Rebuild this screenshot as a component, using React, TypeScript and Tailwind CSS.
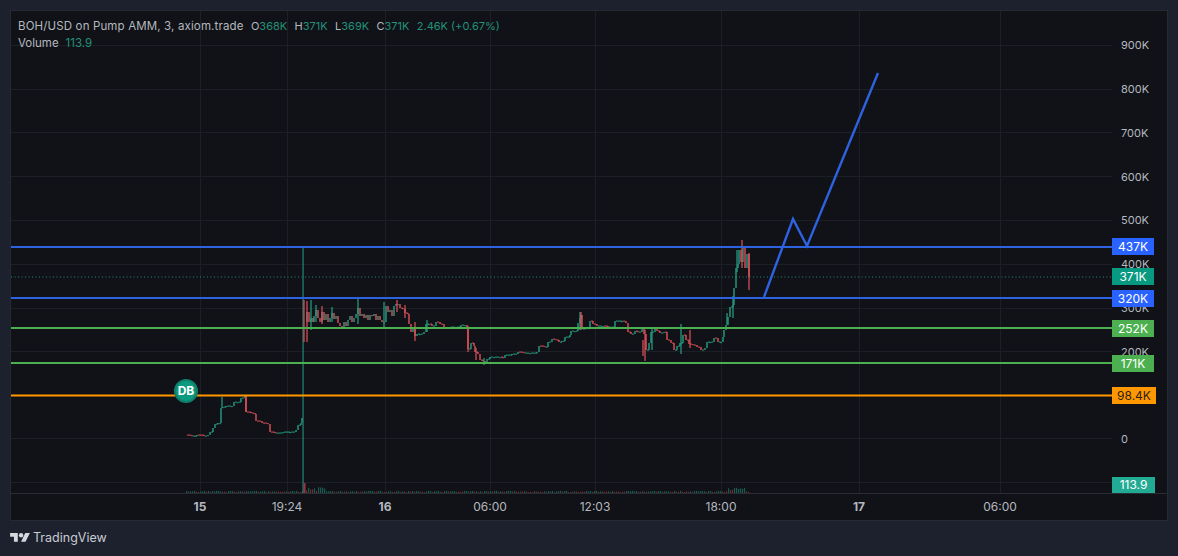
import React from 'react';

type Pt = [number, number];

const UP = '#26a085';
const DOWN = '#e0525c';

// price path in page pixels, drawn as stepped candles
const early: Pt[] = [
  [186, 435], [192, 436], [197, 435], [204, 436], [208, 435], [210, 432], [213, 428], [215, 424],
  [218, 423], [220, 423], [221, 408], [223, 407], [226, 406], [232, 406], [234, 402], [238, 402],
  [241, 398], [245, 396], [246, 412], [251, 413], [255, 414], [256, 421], [262, 423], [268, 424],
  [270, 432], [275, 433], [283, 432], [290, 432], [296, 430], [298, 425], [301, 423], [302, 418],
];

const main: Pt[] = [
  [305, 322], [307, 312], [309, 322], [311, 318], [313, 322], [314, 316], [316, 310], [318, 318],
  [320, 322], [322, 312], [324, 320], [326, 314], [328, 322], [330, 318], [332, 313], [334, 319],
  [336, 316], [338, 323], [340, 326], [342, 327], [344, 322], [346, 326], [348, 320], [350, 316],
  [352, 322], [354, 318], [356, 314], [358, 308], [360, 316], [362, 314], [364, 318], [366, 315],
  [368, 320], [370, 315], [372, 316], [374, 314], [376, 320], [378, 316], [380, 320], [382, 322],
  [384, 322], [386, 306], [388, 312], [390, 310], [392, 316], [394, 306], [396, 304], [398, 304],
  [400, 308], [403, 309], [405, 313], [408, 314], [409, 324], [411, 332], [413, 328], [415, 336],
  [417, 334], [420, 334], [424, 332], [426, 324], [429, 324], [432, 326], [436, 322], [440, 324],
  [444, 328], [450, 327], [456, 327], [461, 325], [465, 325], [467, 328], [468, 349], [471, 343],
  [474, 346], [475, 352], [478, 354], [480, 360], [483, 361], [485, 363], [487, 359], [490, 357],
  [494, 357], [500, 357], [503, 358], [505, 355], [512, 354], [518, 352], [524, 353], [530, 353],
  [537, 352], [539, 346], [545, 347], [548, 342], [552, 339], [556, 340], [559, 342], [562, 341],
  [565, 337], [570, 335], [571, 331], [575, 331], [578, 323], [580, 318], [581, 315], [582, 329],
  [586, 328], [589, 328], [590, 321], [593, 324], [597, 326], [603, 326], [608, 327], [611, 327],
  [615, 321], [622, 321], [626, 323], [628, 332], [631, 334], [635, 331], [638, 332], [642, 329],
  [644, 334], [646, 350], [649, 343], [651, 332], [655, 329], [657, 331], [660, 333], [664, 332],
  [667, 340], [671, 343], [674, 350], [677, 346], [680, 343], [683, 335], [686, 340], [689, 344],
  [693, 345], [697, 347], [701, 350], [705, 348], [707, 342], [710, 342], [714, 338], [718, 342],
  [721, 342], [723, 337], [724, 330], [726, 325], [728, 317], [730, 307], [733, 305], [734, 288],
  [736, 268], [738, 264], [739, 250], [741, 262], [743, 246], [745, 268], [747, 254], [749, 277],
];

// wicks as x, top y, bottom y
const wicks: [number, number, number, string][] = [
  [222, 397, 408, UP], [246, 395, 412, DOWN], [304, 300, 342, DOWN], [307, 301, 342, DOWN], [311, 300, 330, UP],
  [316, 305, 322, UP], [322, 306, 324, DOWN], [332, 307, 322, UP], [358, 298, 324, UP],
  [384, 302, 328, UP], [397, 300, 312, DOWN], [405, 305, 318, DOWN], [415, 322, 341, DOWN],
  [427, 320, 332, UP], [468, 326, 352, DOWN], [476, 348, 360, DOWN], [484, 358, 365, UP],
  [580, 312, 330, UP], [581, 312, 330, DOWN], [645, 330, 361, DOWN], [643, 340, 356, DOWN],
  [652, 328, 350, UP], [681, 324, 354, UP], [690, 330, 348, DOWN], [727, 313, 325, UP],
  [733, 296, 318, UP], [742, 240, 268, DOWN], [749, 253, 290, DOWN], [737, 250, 272, UP],
];

const vGrid = [200, 287, 385, 490, 595, 721, 859, 1000];
const hGrid = [45, 89, 132, 176, 220, 264, 308, 351, 395, 438, 482];

// the 100K row is fully behind the 98.4K tag, so it stays empty
const priceLabels = ['900K', '800K', '700K', '600K', '500K', '400K', '300K', '200K', '', '0'];

// small deterministic noise, so the picture is the same on every load
const noise = (i: number) => {
  const v = Math.sin(i * 12.9898) * 43758.5453;
  return v - Math.floor(v);
};

function Candles({ points }: { points: Pt[] }) {
  const out: React.ReactNode[] = [];
  points.forEach(([x, y], i) => {
    if (i === 0) return;
    const [px, py] = points[i - 1];
    const color = y <= py ? UP : DOWN;
    // hold the previous level across the gap, then jump
    for (let fx = px + 2; fx < x; fx += 2) {
      out.push(<rect key={`${x}-${fx}`} x={fx - 0.8} y={py - 0.5} width={1.6} height={1.2} fill={color} />);
    }
    out.push(
      <rect key={x} x={x - 0.7} y={Math.min(y, py)} width={1.4} height={Math.max(Math.abs(y - py), 1.2)} fill={color} />,
    );
  });
  return <>{out}</>;
}

function VolumeBars() {
  const bars: React.ReactNode[] = [];
  for (let x = 186; x < 750; x += 2) {
    const n = noise(x);
    let h = 0.8 + n * 1.4;
    if (x > 304 && x < 326) h = 1.5 + n * 5;
    if (x > 724 && x < 745) h = 1.5 + n * 4;
    bars.push(<rect key={x} x={x} y={493 - h} width={1.2} height={h} fill={n > 0.5 ? '#1a5a4f' : '#6a2e34'} />);
  }
  return <>{bars}</>;
}

function Chart() {
  return (
    <svg viewBox="11 11 1101 482" className="block h-[482px] w-[1101px]">
      {hGrid.map(y => (
        <line key={y} x1={11} x2={1112} y1={y + 0.5} y2={y + 0.5} stroke="#1c1f26" />
      ))}
      {vGrid.map(x => (
        <line key={x} x1={x + 0.5} x2={x + 0.5} y1={11} y2={493} stroke="#1c1f26" />
      ))}
      <VolumeBars />
      <Candles points={early} />
      <rect x={302.5} y={247} width={1.1} height={246} fill="#25907c" />
      <rect x={303.6} y={483} width={2} height={10} fill="#8f3840" />
      <Candles points={main} />
      {wicks.map(([x, top, bottom, color]) => (
        <rect key={`${x}-${top}`} x={x - 0.6} y={top} width={1.2} height={bottom - top} fill={color} />
      ))}
      <line x1={11} x2={1112} y1={277} y2={277} stroke="#1f8a73" strokeDasharray="1 2.5" />
      <line x1={11} x2={1112} y1={247} y2={247} stroke="#2e62e0" strokeWidth={2} />
      <line x1={11} x2={1112} y1={298} y2={298} stroke="#2e62e0" strokeWidth={2} />
      <line x1={11} x2={1112} y1={328} y2={328} stroke="#4caf50" strokeWidth={2} />
      <line x1={11} x2={1112} y1={363} y2={363} stroke="#4caf50" strokeWidth={2} />
      <line x1={11} x2={1112} y1={395.5} y2={395.5} stroke="#ff9800" strokeWidth={2} />
      <polyline points="764,297 793,219 807,246 878,73" fill="none" stroke="#2e62e0" strokeWidth={2.4} />
    </svg>
  );
}

function PriceTag({ text, className }: { text: string; className: string }) {
  return (
    <div className={`absolute left-0 flex items-center justify-center text-[12px] leading-none ${className}`}>
      {text}
    </div>
  );
}

export default function App() {
  return (
    <div className="flex h-[556px] w-[1178px] flex-col bg-[#1d212e] pl-[10px] pr-[10px] pt-[10px] font-['Inter',sans-serif]">
      <div className="flex h-[511px] flex-col border border-[#262a33] bg-[#101217]">
        <div className="flex h-[482px]">
          <div className="relative w-[1101px]">
            <Chart />
            <div className="absolute left-[7px] top-[7px] text-[11.5px] leading-[17px] text-[#b4b8bf]">
              <div className="flex gap-[7.4px] whitespace-nowrap text-[11px]">
                <span className="text-[11.5px] tracking-[0.14px]">BOH/USD on Pump AMM, 3, axiom.trade</span>
                <span>O<span className="text-[#22917a]">368K</span></span>
                <span>H<span className="text-[#22917a]">371K</span></span>
                <span>L<span className="text-[#22917a]">369K</span></span>
                <span>C<span className="text-[#22917a]">371K</span></span>
                <span className="text-[#22917a]">2.46K (+0.67%)</span>
              </div>
              <div className="flex gap-[7px]">
                <span>Volume</span>
                <span className="text-[#22917a]">113.9</span>
              </div>
            </div>
            {/* bubble marker sits on the orange line */}
            <div className="absolute left-[163px] top-[368px] flex h-[24px] w-[24px] items-center justify-center rounded-full border-2 border-[#0f7f6b] bg-[#0a9a7f] text-[12px] font-bold text-white">
              DB
            </div>
          </div>
          <div className="relative flex-1 pt-[13px] text-[11px] text-[#b4b8bf]">
            {priceLabels.map((label, i) => (
              <div key={i} className="flex h-[43.75px] items-center pl-[9px] leading-none">
                {label}
              </div>
            ))}
            <PriceTag text="437K" className="top-[227px] h-[17px] w-[42px] bg-[#2962ff] text-white" />
            <PriceTag text="371K" className="top-[257px] h-[17px] w-[42px] bg-[#089981] text-white" />
            <PriceTag text="320K" className="top-[279px] h-[17px] w-[42px] bg-[#2962ff] text-white" />
            <PriceTag text="252K" className="top-[309px] h-[17px] w-[42px] bg-[#4caf50] text-white" />
            <PriceTag text="171K" className="top-[344px] h-[17px] w-[42px] bg-[#4caf50] text-white" />
            <PriceTag text="98.4K" className="top-[376px] h-[17px] w-[44px] bg-[#ff9800] text-[#2b2116]" />
            <PriceTag text="113.9" className="top-[466px] h-[16px] w-[43px] bg-[#22ab94] text-white" />
          </div>
        </div>
        <div className="flex flex-1 items-center border-t border-[#2a2d34] text-[12px] text-[#b4b8bf]">
          <div className="ml-[189px] flex w-0 justify-center font-bold">15</div>
          <div className="ml-[87px] flex w-0 justify-center">19:24</div>
          <div className="ml-[98px] flex w-0 justify-center font-bold">16</div>
          <div className="ml-[105px] flex w-0 justify-center">06:00</div>
          <div className="ml-[105px] flex w-0 justify-center">12:03</div>
          <div className="ml-[126px] flex w-0 justify-center">18:00</div>
          <div className="ml-[138px] flex w-0 justify-center font-bold">17</div>
          <div className="ml-[141px] flex w-0 justify-center">06:00</div>
        </div>
      </div>
      <div className="flex flex-1 items-center gap-[3px] text-[12.5px] text-[#c9ccd3]">
        <svg viewBox="0 0 36 20" className="h-[11px] w-[20px]" fill="#d6d8dd">
          <path d="M14 16H7V7H0V0h14v16ZM28 16h-8L27.5 0H36l-8 16Z" />
          <circle cx="20" cy="4" r="4" />
        </svg>
        <span>TradingView</span>
      </div>
    </div>
  );
}
